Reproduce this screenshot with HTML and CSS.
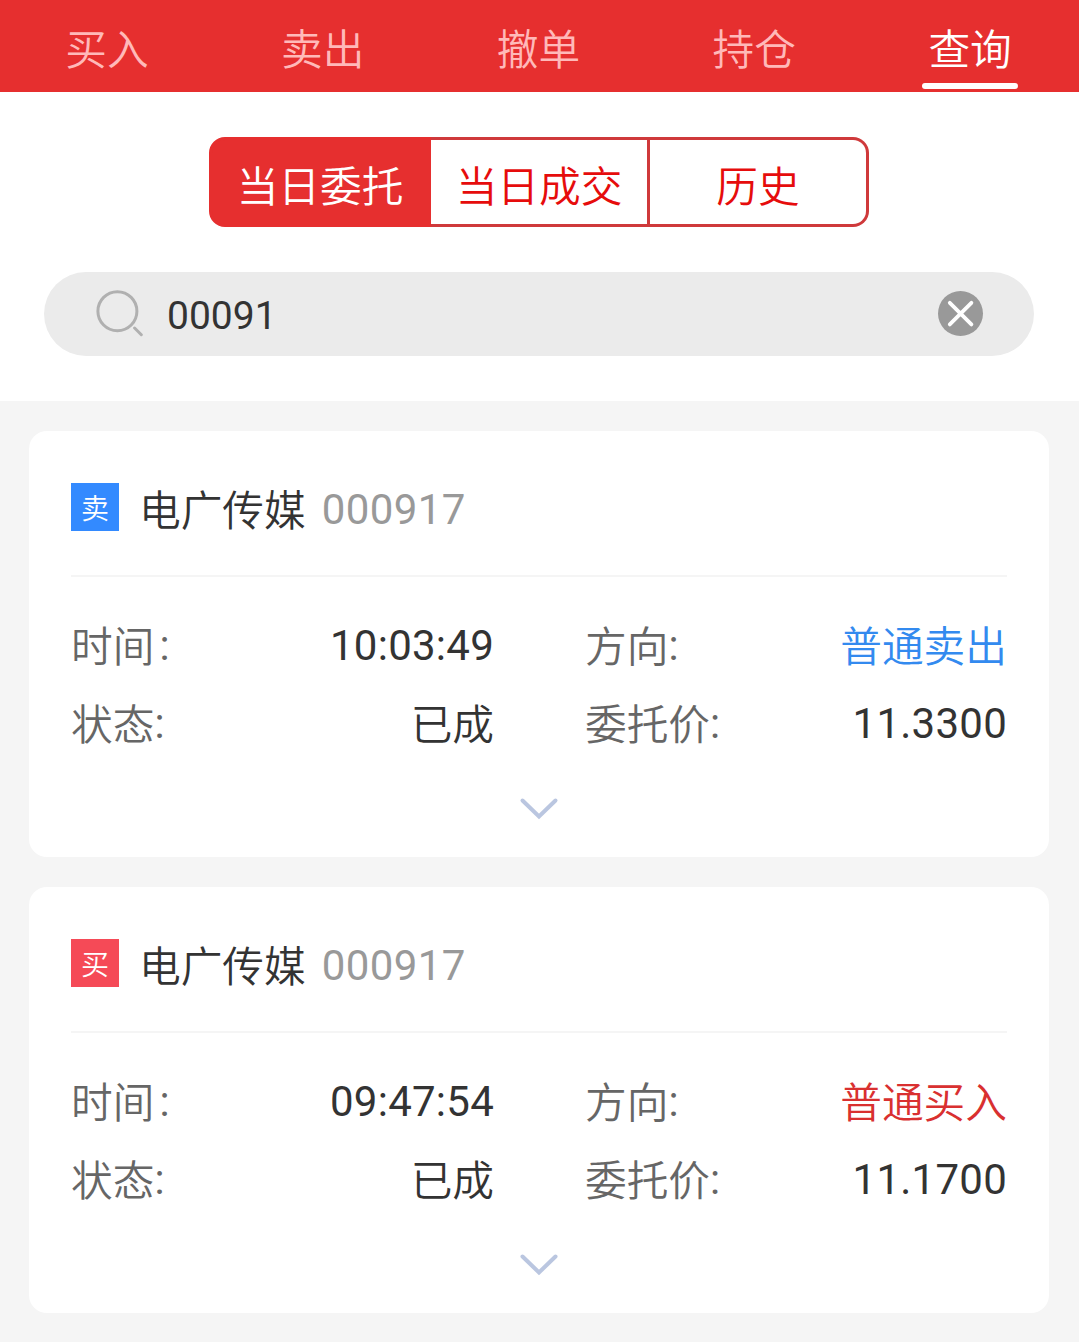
FILE: index.html
```html
<!DOCTYPE html>
<html lang="zh-CN">
<head>
<meta charset="utf-8">
<title>查询</title>
<link rel="stylesheet" href="styles.css">
</head>
<body>
<nav class="tabs">
  <a class="tab">买入</a>
  <a class="tab">卖出</a>
  <a class="tab">撤单</a>
  <a class="tab">持仓</a>
  <a class="tab active">查询</a>
</nav>
<section class="filters">
  <div class="segments">
    <div class="segment selected">当日委托</div>
    <div class="segment">当日成交</div>
    <div class="segment">历史</div>
  </div>
  <div class="search">
    <svg class="search-icon" width="48" height="48" viewBox="0 0 48 48" fill="none" stroke="#b0b0b0" stroke-width="3">
      <circle cx="22.4" cy="21.2" r="19.500"/>
      <path d="M39.6 38l6.7 6.7" stroke-linecap="round"/>
    </svg>
    <span class="query">00091</span>
    <svg class="clear-icon" width="46" height="46" viewBox="0 0 46 46" fill="none">
      <circle cx="22.5" cy="22.5" r="22.5" fill="#999"/>
      <path d="M11.8 11.8l21.6 21.6M33.4 11.8L11.8 33.4" stroke="#fff" stroke-width="3.8" stroke-linecap="round"/>
    </svg>
  </div>
</section>
<main class="orders">
  <article class="card">
    <header class="card-head">
      <span class="badge sell">卖</span>
      <span class="name">电广传媒</span>
      <span class="code">000917</span>
    </header>
    <div class="fields">
      <div class="field"><span class="label">时间<span class="colon spaced">:</span></span><span class="value">10:03:49</span></div>
      <div class="field"><span class="label">方向<span class="colon">:</span></span><span class="value cjk sell-text">普通卖出</span></div>
      <div class="field"><span class="label">状态<span class="colon">:</span></span><span class="value cjk">已成</span></div>
      <div class="field"><span class="label">委托价<span class="colon">:</span></span><span class="value">11.3300</span></div>
    </div>
    <div class="more">
      <svg width="40" height="26" viewBox="0 0 40 26" fill="none" stroke="#bac6e0" stroke-width="4"><path d="M3.5 4.500L20 20.500l16.500-16" stroke-linecap="round"/></svg>
    </div>
  </article>
  <article class="card">
    <header class="card-head">
      <span class="badge buy">买</span>
      <span class="name">电广传媒</span>
      <span class="code">000917</span>
    </header>
    <div class="fields">
      <div class="field"><span class="label">时间<span class="colon spaced">:</span></span><span class="value">09:47:54</span></div>
      <div class="field"><span class="label">方向<span class="colon">:</span></span><span class="value cjk buy-text">普通买入</span></div>
      <div class="field"><span class="label">状态<span class="colon">:</span></span><span class="value cjk">已成</span></div>
      <div class="field"><span class="label">委托价<span class="colon">:</span></span><span class="value">11.1700</span></div>
    </div>
    <div class="more">
      <svg width="40" height="26" viewBox="0 0 40 26" fill="none" stroke="#bac6e0" stroke-width="4"><path d="M3.5 4.500L20 20.500l16.500-16" stroke-linecap="round"/></svg>
    </div>
  </article>
</main>
</body>
</html>
```
FILE: styles.css
```css
* { box-sizing: border-box; }
body {
  margin: 0;
  background: #f5f5f5;
  color: #333;
  font-family: Roboto, "Noto Sans CJK SC", sans-serif;
  font-size: 41.7px;
}
.tabs,
.segments,
.badge,
.name,
.label,
.value.cjk {
  font-family: "Noto Sans CJK SC", sans-serif;
  font-weight: 350;
}
.tabs {
  display: flex;
  height: 92px;
  background: #e62f2f;
  color: #ffb9b9;
}
.tab {
  flex: 1 1 0;
  display: flex;
  flex-direction: column;
  align-items: center;
  padding: 6px 2px 0 0;
  line-height: 82px;
}
.tab.active { color: #fff; }
.tab.active::after {
  content: "";
  width: 96px;
  height: 6px;
  margin-top: -5px;
  border-radius: 3px;
  background: #fff;
  flex: none;
}
.filters {
  height: 309px;
  padding: 45px 45px 0 44px;
  background: #fff;
}
.segments {
  display: grid;
  grid-template-columns: 222px 219px 219px;
  width: 660px;
  height: 90px;
  margin: 0 auto 45px 165px;
  color: #e60c0c;
}
.segment {
  padding-top: 7px;
  line-height: 74px;
  text-align: center;
  border: 3px solid #cf393b;
  border-left: 0;
}
.segment:last-child { border-radius: 0 16px 16px 0; }
.segment.selected {
  border: 3px solid #e62f2f;
  border-radius: 16px 0 0 16px;
  background: #e62f2f;
  color: #fff;
}
.search {
  display: flex;
  align-items: center;
  height: 84px;
  padding: 0 50px 0 51px;
  border-radius: 42px;
  background: #ebebeb;
}
.query {
  flex: 1;
  padding: 4px 0 0 24px;
  font-size: 39px;
}
.orders {
  display: flex;
  flex-direction: column;
  gap: 30px;
  padding: 30px 30px 29px 29px;
}
.card {
  height: 426px;
  padding: 0 42px;
  border-radius: 18px;
  background: #fff;
}
.card-head {
  display: flex;
  align-items: center;
  height: 146px;
  padding-top: 8px;
  border-bottom: 2px solid #f5f5f5;
}
.badge {
  width: 48px;
  height: 48px;
  padding-top: 3px;
  line-height: 42px;
  font-size: 28px;
  text-align: center;
  color: #fff;
}
.sell { background: #338aff; }
.buy { background: #f54a57; }
.name {
  margin-left: 20px;
  padding-top: 2px;
  line-height: 48px;
}
.code {
  margin-left: 16px;
  padding-top: 4px;
  color: #999;
  font-size: 42px;
  letter-spacing: .4px;
}
.fields {
  display: grid;
  grid-template-columns: 423px 422px;
  column-gap: 91px;
  padding-top: 30px;
}
.field {
  display: flex;
  justify-content: space-between;
  height: 78px;
  line-height: 78px;
}
.label {
  line-height: 74px;
  color: #666;
}
.colon {
  font-family: Roboto, sans-serif;
  font-weight: 400;
  line-height: 1;
  vertical-align: 2px;
}
.colon.spaced { margin-left: 5px; }
.value { font-size: 42px; letter-spacing: .25px; }
.value.cjk { font-size: 41.7px; line-height: 74px; letter-spacing: 0; }
.sell-text { color: #338aef; }
.buy-text { color: #d93030; }
.more {
  display: flex;
  justify-content: center;
  padding-top: 33px;
}
```
